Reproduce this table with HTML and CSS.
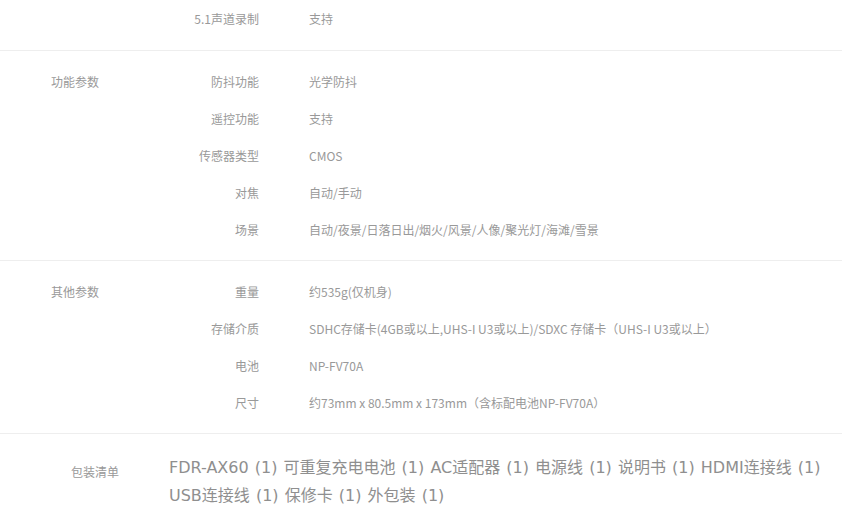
FILE: index.html
```html
<!DOCTYPE html>
<html lang="zh-CN">
<head>
  <meta charset="UTF-8">
  <meta name="viewport" content="width=device-width, initial-scale=1.0">
  <title>规格参数</title>
  <link rel="stylesheet" href="styles.css">
</head>
<body>
  <div class="specs">
    <section class="spec-group first">
      <div class="group-name"></div>
      <div class="spec-rows">
        <div class="spec-row"><span class="key">5.1声道录制</span><span class="val">支持</span></div>
      </div>
    </section>

    <section class="spec-group">
      <div class="group-name">功能参数</div>
      <div class="spec-rows">
        <div class="spec-row"><span class="key">防抖功能</span><span class="val">光学防抖</span></div>
        <div class="spec-row"><span class="key">遥控功能</span><span class="val">支持</span></div>
        <div class="spec-row"><span class="key">传感器类型</span><span class="val">CMOS</span></div>
        <div class="spec-row"><span class="key">对焦</span><span class="val">自动/手动</span></div>
        <div class="spec-row"><span class="key">场景</span><span class="val">自动/夜景/日落日出/烟火/风景/人像/聚光灯/海滩/雪景</span></div>
      </div>
    </section>

    <section class="spec-group">
      <div class="group-name">其他参数</div>
      <div class="spec-rows">
        <div class="spec-row"><span class="key">重量</span><span class="val">约535g(仅机身)</span></div>
        <div class="spec-row"><span class="key">存储介质</span><span class="val">SDHC存储卡(4GB或以上,UHS-I U3或以上)/SDXC 存储卡（UHS-I U3或以上）</span></div>
        <div class="spec-row"><span class="key">电池</span><span class="val">NP-FV70A</span></div>
        <div class="spec-row"><span class="key">尺寸</span><span class="val">约73mm x 80.5mm x 173mm（含标配电池NP-FV70A）</span></div>
      </div>
    </section>

    <section class="package">
      <div class="package-name">包装清单</div>
      <div class="package-list">
        <span class="item">FDR-AX60 (1)</span>
        <span class="item">可重复充电电池 (1)</span>
        <span class="item">AC适配器 (1)</span>
        <span class="item">电源线 (1)</span>
        <span class="item">说明书 (1)</span>
        <span class="item">HDMI连接线 (1)</span>
        <span class="item">USB连接线 (1)</span>
        <span class="item">保修卡 (1)</span>
        <span class="item">外包装 (1)</span>
      </div>
    </section>
  </div>
</body>
</html>
```

FILE: styles.css
```css
body {
  margin: 0;
  background: #fff;
  color: #999;
  font-family: "Noto Sans CJK SC", "DejaVu Sans", sans-serif;
  font-size: 12px;
}
.spec-group {
  display: flex;
  padding: 12px 0;
  border-bottom: 1px solid #eee;
}
.spec-group.first {
  padding-top: 0;
  padding-bottom: 13px;
}
.group-name {
  width: 110px;
  padding-left: 51px;
  line-height: 37px;
}
.spec-rows {
  flex: 1;
}
.spec-row {
  display: flex;
  height: 37px;
  line-height: 37px;
}
.key {
  width: 98px;
  text-align: right;
  margin-right: 50px;
}
.val {
  flex: 1;
}
.package {
  display: flex;
  padding: 20px 0 10px;
}
.package-name {
  width: 119px;
  text-align: right;
  margin-right: 50px;
  line-height: 28px;
  padding-top: 4px;
}
.package-list {
  flex: 1;
  font-family: "DejaVu Sans", "Noto Sans CJK SC", sans-serif;
  font-size: 16px;
  line-height: 28px;
  word-spacing: 1px;
  color: #8f8f8f;
  padding-right: 8px;
}
.item {
  white-space: nowrap;
}
```
